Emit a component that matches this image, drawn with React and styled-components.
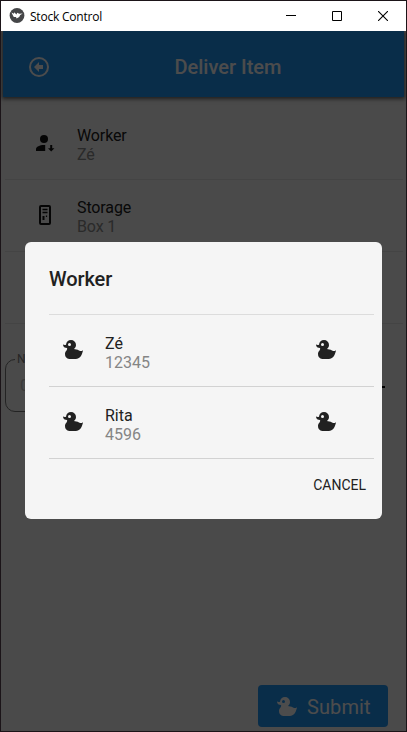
import React from "react";
import styled, { createGlobalStyle } from "styled-components";

const GlobalStyle = createGlobalStyle`
  * { box-sizing: border-box; }
  body { margin: 0; font-family: Roboto, sans-serif; }
`;

const Window = styled.div`
  width: 407px;
  height: 732px;
  display: flex;
  flex-direction: column;
  overflow: hidden;
  background: #fff;
  border: 1px solid #1b1418;
`;

const TitleBar = styled.div`
  height: 30px;
  flex: none;
  display: flex;
  align-items: center;
  padding: 0 0 0 8px;
  background: #fff;
  color: #000;
`;

const WindowTitle = styled.span`
  flex: 1;
  margin-left: 5px;
  font: 12px "Open Sans", sans-serif;
  letter-spacing: -0.22px;
`;

const WindowButton = styled.div`
  width: 46px;
  display: flex;
  justify-content: center;
`;

const Screen = styled.div`
  position: relative;
  flex: 1;
  display: flex;
  flex-direction: column;
  overflow: hidden;
  background: #f7f7f7;
`;

const Toolbar = styled.div`
  height: 66px;
  flex: none;
  margin: 0 2px;
  padding: 6px 25px 0 24px;
  display: flex;
  align-items: center;
  background: #2196f3;
  color: #fff;
  box-shadow: 0 1px 4px 1px rgba(0, 0, 0, 0.6);
`;

const ToolbarTitle = styled.div`
  flex: 1;
  text-align: center;
  font-size: 20px;
  font-weight: 500;
  padding-left: 25px;
  margin-right: -1px;
`;

const List = styled.div`
  margin: 11px 3px 0 4px;
`;

const Row = styled.div`
  height: 72px;
  display: flex;
  align-items: center;
  padding-left: ${(p) => p.$inset || 28}px;
  padding-bottom: ${(p) => p.$lift || 0}px;
  border-bottom: 1px solid ${(p) => p.$line || "#e4e4e4"};
`;

const Labels = styled.div`
  flex: 1;
  margin-left: 20px;
  padding-top: ${(p) => p.$drop || 4}px;
  font-size: 16px;
  line-height: 19px;
  letter-spacing: ${(p) => p.$tracking || 0}px;
  color: #212121;
`;

const Secondary = styled.div`
  color: ${(p) => p.$color || "#8c8c8c"};
`;

const QuantityRow = styled.div`
  display: flex;
  align-items: center;
  justify-content: space-between;
  padding: 0 21px 0 4px;
`;

const Field = styled.fieldset`
  width: 290px;
  height: 60px;
  margin: 28px 0 0;
  padding: 10px 14px;
  border: 1px solid #777;
  border-radius: 10px;
  color: #c4c4c4;
  font-size: 16px;
`;

const Legend = styled.legend`
  padding: 0 2px;
  margin-left: -5px;
  color: #808080;
  font-size: 12px;
  line-height: 14px;
`;

const Minus = styled.div`
  width: 14px;
  height: 2px;
  margin-top: 38px;
  background: #000;
`;

const SubmitButton = styled.div`
  width: 130px;
  height: 42px;
  margin: auto 18px 4px auto;
  display: flex;
  align-items: center;
  gap: 8px;
  padding: 1px 0 0 17px;
  border-radius: 4px;
  background: #2196f3;
  color: #fff;
  font-size: 20px;
  letter-spacing: 0.1px;
`;

const Scrim = styled.div`
  position: absolute;
  inset: 0;
  display: flex;
  align-items: center;
  justify-content: center;
  padding-bottom: 2px;
  background: rgba(0, 0, 0, 0.7);
`;

const Dialog = styled.div`
  width: 357px;
  height: 277px;
  padding: 24px 8px 0 24px;
  border-radius: 6px;
  background: #f5f5f5;
  color: #212121;
`;

const DialogTitle = styled.div`
  height: 49px;
  font-size: 20px;
  line-height: 26px;
  font-weight: 500;
  letter-spacing: -0.1px;
  border-bottom: 1px solid #dcdcdc;
`;

const TrailingIcon = styled.div`
  width: 60px;
  display: flex;
`;

const Cancel = styled.div`
  margin-top: 18px;
  padding-right: 8px;
  text-align: right;
  font-size: 14px;
  line-height: 17px;
`;

const Svg = styled.svg`
  display: block;
  flex: none;
`;

const Duck = ({ size = 24 }) => (
  <Svg width={size} height={size} viewBox="0 0 24 24" fill="currentColor">
    <path d="M8.5,5A1.5,1.5 0 0,0 7,6.5A1.5,1.5 0 0,0 8.5,8A1.5,1.5 0 0,0 10,6.5A1.5,1.5 0 0,0 8.5,5M10,2A5,5 0 0,1 15,7C15,8.7 14.15,10.2 12.86,11.1C14.44,11.25 16.22,11.61 18,12.5C21,14 22,12 22,12C22,12 21,21 15,21H9C9,21 4,21 4,16C4,13 7,12 6,10C2,10 2,6.5 2,6.5C3,7 4.24,7 5,6.65C5.19,4.05 7.36,2 10,2Z" />
  </Svg>
);

const BackIcon = () => (
  <Svg width="24" height="24" viewBox="0 0 24 24" fill="currentColor">
    <path d="M22,12A10,10 0 0,1 12,22A10,10 0 0,1 2,12A10,10 0 0,1 12,2A10,10 0 0,1 22,12M20,12A8,8 0 0,0 12,4A8,8 0 0,0 4,12A8,8 0 0,0 12,20A8,8 0 0,0 20,12M7,12L12,7V10H16V14H12V17Z" fillRule="evenodd" />
  </Svg>
);

const WorkerIcon = () => (
  <Svg width="24" height="24" viewBox="0 0 24 24" fill="#121212">
    <circle cx="11" cy="8" r="4" />
    <path d="M3,20V18C3,15.8 6.6,14 11,14H12.2V20ZM17.2,14H19.2V17.2H21.4L18.2,20.6L15,17.2H17.2Z" />
  </Svg>
);

const StorageIcon = () => (
  <Svg width="24" height="24" viewBox="0 0 24 24" fill="none" stroke="#121212">
    <rect x="7" y="3" width="10" height="18" rx="1" strokeWidth="2" />
    <path d="M9.5,6.5H14.5M9.5,9.5H14.5" strokeWidth="1.3" />
    <path d="M10.5,13V17" strokeWidth="2" />
    <path d="M13.5,12.5V14" strokeWidth="1.2" />
  </Svg>
);

const AppLogo = () => (
  <Svg width="16" height="16" viewBox="0 0 16 16">
    <circle cx="8" cy="7.5" r="7.4" fill="#454648" />
    <path d="M2.5,4.5L5,5.7L5.2,4.3L7.5,6.5L8.2,4.7L10.2,5.7L13.7,5.5L11.2,6.9L10.2,9L7.6,10.5L7,9L4.8,8.9L3.8,7.3Z" fill="#fff" />
  </Svg>
);

const workers = [
  { name: "Zé", code: "12345" },
  { name: "Rita", code: "4596" },
];

export default function App() {
  return (
    <Window>
      <GlobalStyle />
      <TitleBar>
        <AppLogo />
        <WindowTitle>Stock Control</WindowTitle>
        <WindowButton>
          <Svg width="10" height="10" stroke="#000"><path d="M0,4.5H10" /></Svg>
        </WindowButton>
        <WindowButton>
          <Svg width="10" height="10" fill="none" stroke="#000"><path d="M.5,.5H9.5V9.5H.5Z" /></Svg>
        </WindowButton>
        <WindowButton>
          <Svg width="10" height="10" stroke="#000" strokeWidth="1.1"><path d="M0,0L10,10M10,0L0,10" /></Svg>
        </WindowButton>
      </TitleBar>
      <Screen>
        <Toolbar>
          <BackIcon />
          <ToolbarTitle>Deliver Item</ToolbarTitle>
        </Toolbar>
        <List>
          <Row $lift={2}>
            <WorkerIcon />
            <Labels $tracking={-0.12}>Worker<Secondary>Zé</Secondary></Labels>
          </Row>
          <Row $lift={2}>
            <StorageIcon />
            <Labels $tracking={-0.12}>Storage<Secondary>Box 1</Secondary></Labels>
          </Row>
          <Row />
        </List>
        <QuantityRow>
          <Field><Legend>N</Legend>0</Field>
          <Minus />
        </QuantityRow>
        <SubmitButton><Duck />Submit</SubmitButton>
        <Scrim>
          <Dialog>
            <DialogTitle>Worker</DialogTitle>
            {workers.map((w) => (
              <Row key={w.code} $inset={12} $line="#d2d2d2">
                <Duck />
                <Labels $drop={5}>{w.name}<Secondary $color="#858585">{w.code}</Secondary></Labels>
                <TrailingIcon><Duck /></TrailingIcon>
              </Row>
            ))}
            <Cancel>CANCEL</Cancel>
          </Dialog>
        </Scrim>
      </Screen>
    </Window>
  );
}
